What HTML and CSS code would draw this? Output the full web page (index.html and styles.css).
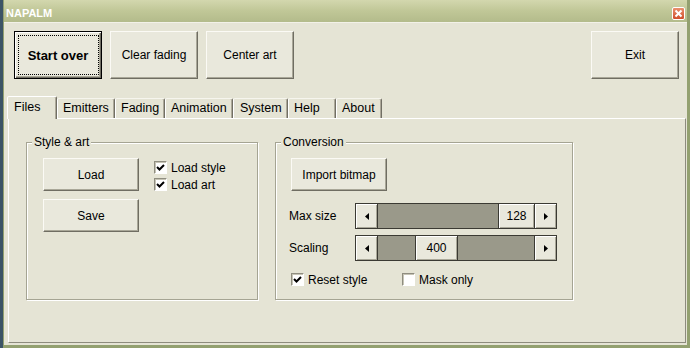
FILE: index.html
```html
<!DOCTYPE html>
<html lang="en">
<head>
    <meta charset="UTF-8">
    <title>NAPALM</title>
    <link rel="stylesheet" href="styles.css">
</head>
<body>

<div class="window">
    <!-- Title bar -->
    <div class="titlebar">
        <span class="title">NAPALM</span>
        <span class="close">
            <svg width="9" height="9" viewBox="0 0 9 9"><path d="M1.5 1.5 L7.5 7.5 M7.5 1.5 L1.5 7.5" stroke="#fff" stroke-width="2"/></svg>
        </span>
    </div>

    <div class="client">
        <!-- Main buttons -->
        <div class="toolbar">
            <button class="btn btn-big btn-default">Start over</button>
            <button class="btn btn-big">Clear fading</button>
            <button class="btn btn-big">Center art</button>
            <button class="btn btn-big btn-exit">Exit</button>
        </div>

        <!-- Tabs -->
        <div class="tabs">
            <div class="tab tab-files active">Files</div>
            <div class="tab tab-emitters">Emitters</div>
            <div class="tab tab-fading">Fading</div>
            <div class="tab tab-animation">Animation</div>
            <div class="tab tab-system">System</div>
            <div class="tab tab-help">Help</div>
            <div class="tab tab-about">About</div>
        </div>

        <div class="panel">
            <div class="group group-style">
                <span class="group-label">Style &amp; art</span>
                <div class="group-body">
                    <div class="btn-col">
                        <button class="btn btn-mid">Load</button>
                        <button class="btn btn-mid">Save</button>
                    </div>
                    <div class="check-col">
                        <div class="check"><span class="box checked"><svg width="9" height="9" viewBox="0 0 9 9"><path d="M1 4 L3.5 6.5 L8 2" stroke="#000" stroke-width="2" fill="none"/></svg></span>Load style</div>
                        <div class="check"><span class="box checked"><svg width="9" height="9" viewBox="0 0 9 9"><path d="M1 4 L3.5 6.5 L8 2" stroke="#000" stroke-width="2" fill="none"/></svg></span>Load art</div>
                    </div>
                </div>
            </div>

            <div class="group group-conv">
                <span class="group-label">Conversion</span>
                <div class="group-body conv-body">
                    <button class="btn btn-mid">Import bitmap</button>

                    <div class="scroll-row">
                        <span class="scroll-label">Max size</span>
                        <div class="scrollbar">
                            <span class="sb-btn sb-left"><svg width="4" height="7" viewBox="0 0 4 7"><polygon points="4,0 4,7 0,3.5" fill="#000"/></svg></span>
                            <div class="sb-track">
                                <span class="sb-thumb" style="margin-left:120px;width:36px">128</span>
                            </div>
                            <span class="sb-btn sb-right"><svg width="4" height="7" viewBox="0 0 4 7"><polygon points="0,0 0,7 4,3.5" fill="#000"/></svg></span>
                        </div>
                    </div>

                    <div class="scroll-row scroll-row-2">
                        <span class="scroll-label">Scaling</span>
                        <div class="scrollbar">
                            <span class="sb-btn sb-left"><svg width="4" height="7" viewBox="0 0 4 7"><polygon points="4,0 4,7 0,3.5" fill="#000"/></svg></span>
                            <div class="sb-track">
                                <span class="sb-thumb sb-thumb-full" style="margin-left:37px;width:43px">400</span>
                            </div>
                            <span class="sb-btn sb-right"><svg width="4" height="7" viewBox="0 0 4 7"><polygon points="0,0 0,7 4,3.5" fill="#000"/></svg></span>
                        </div>
                    </div>

                    <div class="check-row">
                        <div class="check check-wide"><span class="box checked"><svg width="9" height="9" viewBox="0 0 9 9"><path d="M1 4 L3.5 6.5 L8 2" stroke="#000" stroke-width="2" fill="none"/></svg></span>Reset style</div>
                        <div class="check"><span class="box"></span>Mask only</div>
                    </div>
                </div>
            </div>
        </div>
    </div>
</div>

</body>
</html>
```

FILE: styles.css
```css
* {
    box-sizing: border-box;
}
body {
    margin: 0;
    background-color: #3c5466;
    font-family: "Liberation Sans", Arial, sans-serif;
    font-size: 12px;
    color: #000;
}
.window {
    margin-left: 3px;
    width: 687px;
    height: 348px;
    background-color: #e5e4d5;
    border-style: solid;
    border-color: #93a070;
    border-width: 0 3px 3px 1px;
    display: flex;
    flex-direction: column;
}
.titlebar {
    height: 22px;
    flex: none;
    display: flex;
    justify-content: space-between;
    align-items: flex-start;
    padding: 6px 2px 0 2px;
    background: linear-gradient(#d3d7ae, #c0c797 50%, #b3bb8b);
}
.title {
    color: #fff;
    font-weight: bold;
    font-size: 11px;
    line-height: 15px;
}
.close {
    width: 13px;
    height: 13px;
    margin-top: 1px;
    background: linear-gradient(#ea8f6e, #d0502c);
    border: 1px solid #fff;
    border-radius: 2px;
    display: flex;
    align-items: center;
    justify-content: center;
}
.client {
    flex: 1;
    border-top: 1px solid #f2f1e8;
}

/* buttons */
.btn {
    background-color: #e9e8dc;
    border: 1px solid;
    border-color: #fbfaf5 #6f6d62 #6f6d62 #fbfaf5;
    box-shadow: inset -1px -1px #a9a798;
    font-family: "Liberation Sans", Arial, sans-serif;
    font-size: 12px;
    color: #000;
    padding: 0;
}
.btn-default {
    position: relative;
    border-color: #000;
    box-shadow: inset 1px 1px #fff, inset -1px -1px #6f6d62, inset -2px -2px #a9a798;
    font-weight: bold;
    font-size: 13px;
}
.btn-default::after {
    content: "";
    position: absolute;
    top: 3px;
    left: 3px;
    right: 2px;
    bottom: 3px;
    border: 1px dotted #000;
}
.toolbar {
    display: flex;
    gap: 8px;
    padding: 8px 8px 0 10px;
}
.btn-big {
    width: 88px;
    height: 48px;
}
.btn-exit {
    margin-left: auto;
}
.btn-mid {
    width: 96px;
    height: 33px;
}

/* tabs */
.tabs {
    display: flex;
    align-items: flex-end;
    height: 22px;
    margin-top: 17px;
    padding-left: 3px;
    position: relative;
    z-index: 1;
}
.tab {
    height: 20px;
    padding-left: 5px;
    font-size: 12.5px;
    line-height: 19px;
    background-color: #e5e4d5;
    border: 1px solid;
    border-bottom: 0;
    border-color: #f6f5ee #716f64 transparent #fff;
    box-shadow: inset -1px 0 #aca899;
    border-radius: 2px 2px 0 0;
}
.tab.active {
    height: 23px;
    line-height: 21px;
    margin-bottom: -1px;
    padding-left: 6px;
    border-top-color: #fff;
}
.tab-files { width: 50px; }
.tab-emitters { width: 58px; }
.tab-fading { width: 50px; }
.tab-animation { width: 68px; }
.tab-system { width: 55px; padding-left: 6px; }
.tab-help { width: 48px; }
.tab-about { width: 46px; }

.panel {
    margin: 0 1px 0 4px;
    height: 225px;
    border: 1px solid;
    border-color: #fff #8d8b7e #8d8b7e #fff;
    padding: 23px 0 0 17px;
    display: flex;
    gap: 17px;
    align-items: flex-start;
}

/* group boxes */
.group {
    position: relative;
    height: 158px;
    border: 1px solid #a5a493;
    box-shadow: 1px 1px #fff, inset 1px 1px #fff;
}
.group-style {
    width: 232px;
}
.group-conv {
    width: 298px;
}
.group-label {
    position: absolute;
    top: -8px;
    left: 5px;
    padding: 0 2px;
    line-height: 14px;
    background-color: #e5e4d5;
}
.group-body {
    display: flex;
    padding: 15px 0 0 16px;
}
.conv-body {
    flex-direction: column;
    align-items: flex-start;
    padding-left: 15px;
}
.btn-col {
    display: flex;
    flex-direction: column;
    gap: 8px;
}
.check-col {
    margin-left: 15px;
    padding-top: 1px;
    display: flex;
    flex-direction: column;
}
.check {
    display: flex;
    align-items: center;
    height: 17px;
}
.box {
    width: 13px;
    height: 13px;
    margin-right: 4px;
    background-color: #fff;
    border: 1px solid;
    border-color: #8f8d80 #fff #fff #8f8d80;
    box-shadow: inset 1px 1px #c6c4b5;
    display: flex;
    align-items: center;
    justify-content: center;
}
.check-row {
    display: flex;
    margin-top: 10px;
}
.check-wide {
    width: 111px;
}

/* scroll bars */
.scroll-row {
    display: flex;
    align-items: center;
    margin: 12px 0 0 -2px;
}
.scroll-row-2 {
    margin-top: 6px;
}
.scroll-label {
    width: 66px;
}
.scrollbar {
    display: flex;
    width: 202px;
    height: 26px;
    border: 1px solid #3b3a33;
    background-color: #9a998a;
}
.sb-btn {
    width: 22px;
    flex: none;
    background-color: #e9e8dc;
    box-shadow: inset 1px 1px #fff, inset -1px -1px #a9a798;
    display: flex;
    align-items: center;
    justify-content: center;
}
.sb-left {
    border-right: 1px solid #3b3a33;
}
.sb-right {
    border-left: 1px solid #3b3a33;
}
.sb-track {
    flex: 1;
    display: flex;
}
.sb-thumb {
    height: 100%;
    background-color: #e9e8dc;
    border-left: 1px solid #3b3a33;
    box-shadow: inset 1px 1px #fff, inset -1px -1px #a9a798;
    text-align: center;
    line-height: 24px;
}
.sb-thumb-full {
    border-right: 1px solid #3b3a33;
}
```
